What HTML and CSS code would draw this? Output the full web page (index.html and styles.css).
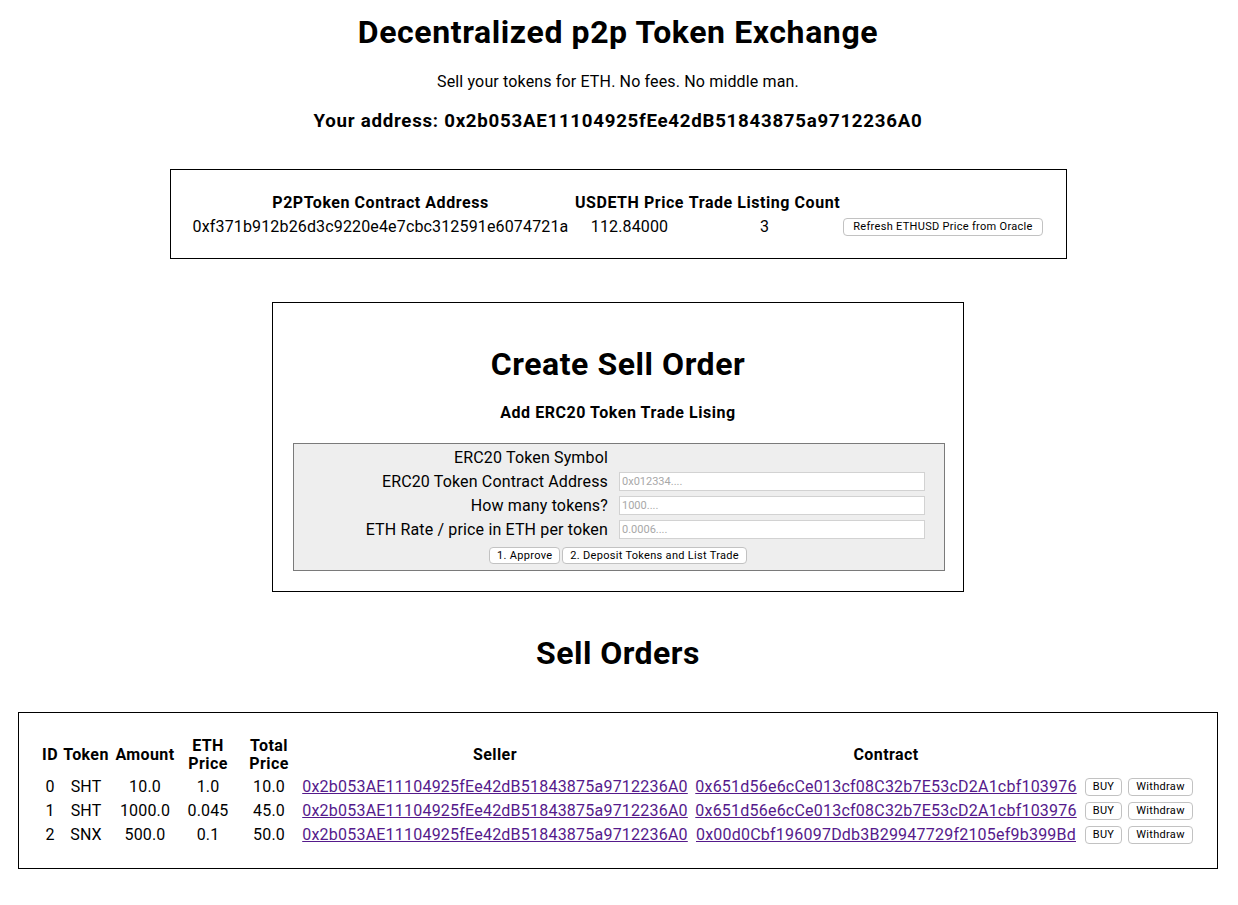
FILE: index.html
```html
<!DOCTYPE html>
<html>
<head>
<meta charset="utf-8">
<title>Decentralized p2p Token Exchange</title>
<link rel="stylesheet" href="styles.css">
</head>
<body>
<div class="app">
  <h1 class="title">Decentralized p2p Token Exchange</h1>
  <p class="subtitle">Sell your tokens for ETH. No fees. No middle man.</p>
  <h3 class="address">Your address: 0x2b053AE11104925fEe42dB51843875a9712236A0</h3>

  <div class="box info-box">
    <table class="info-table">
      <colgroup>
        <col class="c-addr"><col class="c-price"><col class="c-count"><col class="c-btn">
      </colgroup>
      <tr>
        <th>P2PToken Contract Address</th>
        <th>USDETH Price</th>
        <th>Trade Listing Count</th>
        <th></th>
      </tr>
      <tr>
        <td>0xf371b912b26d3c9220e4e7cbc312591e6074721a</td>
        <td>112.84000</td>
        <td>3</td>
        <td><button class="btn btn-wide">Refresh ETHUSD Price from Oracle</button></td>
      </tr>
    </table>
  </div>

  <div class="box create-box">
    <h1 class="create-title">Create Sell Order</h1>
    <h4 class="create-sub">Add ERC20 Token Trade Lising</h4>
    <div class="form-panel">
      <div class="form-grid">
        <label class="form-label">ERC20 Token Symbol</label>
        <span></span>
        <label class="form-label">ERC20 Token Contract Address</label>
        <input class="form-input" type="text" placeholder="0x012334....">
        <label class="form-label">How many tokens?</label>
        <input class="form-input" type="text" placeholder="1000....">
        <label class="form-label">ETH Rate / price in ETH per token</label>
        <input class="form-input" type="text" placeholder="0.0006....">
      </div>
      <div class="form-actions">
        <button class="btn">1. Approve</button><button class="btn">2. Deposit Tokens and List Trade</button>
      </div>
    </div>
  </div>

  <h1 class="orders-title">Sell Orders</h1>

  <div class="box orders-box">
    <table class="orders-table">
      <colgroup>
        <col class="o-id"><col class="o-token"><col class="o-amount"><col class="o-eth"><col class="o-total">
        <col class="o-seller"><col class="o-contract"><col class="o-buy"><col class="o-withdraw">
      </colgroup>
      <thead>
        <tr>
          <th>ID</th><th>Token</th><th>Amount</th><th>ETH Price</th><th>Total Price</th>
          <th>Seller</th><th>Contract</th><th></th><th></th>
        </tr>
      </thead>
      <tbody>
        <tr>
          <td>0</td><td>SHT</td><td>10.0</td><td>1.0</td><td>10.0</td>
          <td><a class="link" href="#">0x2b053AE11104925fEe42dB51843875a9712236A0</a></td>
          <td><a class="link" href="#">0x651d56e6cCe013cf08C32b7E53cD2A1cbf103976</a></td>
          <td><button class="btn">BUY</button></td>
          <td><button class="btn">Withdraw</button></td>
        </tr>
        <tr>
          <td>1</td><td>SHT</td><td>1000.0</td><td>0.045</td><td>45.0</td>
          <td><a class="link" href="#">0x2b053AE11104925fEe42dB51843875a9712236A0</a></td>
          <td><a class="link" href="#">0x651d56e6cCe013cf08C32b7E53cD2A1cbf103976</a></td>
          <td><button class="btn">BUY</button></td>
          <td><button class="btn">Withdraw</button></td>
        </tr>
        <tr>
          <td>2</td><td>SNX</td><td>500.0</td><td>0.1</td><td>50.0</td>
          <td><a class="link" href="#">0x2b053AE11104925fEe42dB51843875a9712236A0</a></td>
          <td><a class="link" href="#">0x00d0Cbf196097Ddb3B29947729f2105ef9b399Bd</a></td>
          <td><button class="btn">BUY</button></td>
          <td><button class="btn">Withdraw</button></td>
        </tr>
      </tbody>
    </table>
  </div>
</div>
</body>
</html>
```

FILE: styles.css
```css
* { box-sizing: border-box; }

body {
  margin: 0;
  padding-right: 2px;
  background: #ffffff;
  color: #000000;
  font-family: Roboto, "Liberation Sans", sans-serif;
  font-size: 16px;
  letter-spacing: 0.15px;
}

.app {
  text-align: center;
  padding-bottom: 37px;
}

.title {
  font-size: 32px;
  font-weight: 700;
  line-height: 37px;
  letter-spacing: 0.6px;
  margin: 14px 0 0;
}

.subtitle {
  margin: 21px 0 0;
  line-height: 19px;
}

.address {
  font-size: 18.72px;
  font-weight: 700;
  line-height: 22px;
  letter-spacing: 0.72px;
  margin: 19px 0 0;
}

.box {
  border: 1px solid #000;
  margin-left: auto;
  margin-right: auto;
}

/* info box */
.info-box {
  width: 897px;
  margin-top: 37px;
  padding: 20px;
}

.info-table {
  width: 100%;
  table-layout: fixed;
  border-collapse: collapse;
}

.info-table th,
.info-table td {
  padding: 0;
  height: 24px;
  text-align: center;
  white-space: nowrap;
  vertical-align: middle;
}

.info-table th {
  letter-spacing: 0.55px;
}

.c-addr { width: 380px; }
.c-price { width: 118px; }
.c-count { width: 152px; }
.c-btn { width: 205px; }

/* create sell order */
.create-box {
  width: 692px;
  margin-top: 43px;
  padding: 20px;
}

.create-title {
  font-size: 32px;
  font-weight: 700;
  line-height: 37px;
  letter-spacing: 0.55px;
  margin: 23px 0 0;
}

.create-sub {
  font-size: 16px;
  font-weight: 700;
  line-height: 19px;
  letter-spacing: 0.55px;
  margin: 20px 0 0;
}

.form-panel {
  margin-top: 21px;
  margin-right: -2px;
  background: #eeeeee;
  border: 1px solid #7a7a7a;
  padding: 2px 19px 6px 0;
}

.form-grid {
  display: grid;
  grid-template-columns: 1fr 306px;
  grid-template-rows: 23px 24px 24px 24px;
  column-gap: 11px;
  align-items: center;
}

.form-label {
  text-align: right;
  line-height: 19px;
}

.form-input {
  width: 306px;
  height: 19px;
  border: 1px solid #d2d2d2;
  background: #ffffff;
  font-family: inherit;
  font-size: 11px;
  padding: 0 2px;
  outline: none;
}

.form-input::placeholder {
  color: #a8a8a8;
}

.form-actions {
  margin-top: 6px;
  margin-right: -17px;
  text-align: center;
  line-height: 17px;
}

/* buttons */
.btn {
  font-family: inherit;
  font-size: 11px;
  line-height: 14px;
  letter-spacing: 0.3px;
  height: 18px;
  padding: 1px 7px;
  background: #ffffff;
  color: #000;
  border: 1px solid #c2c2c2;
  border-radius: 4px;
  vertical-align: middle;
}

.btn-wide {
  padding-left: 9px;
  padding-right: 9px;
}

.form-actions .btn {
  height: 17px;
  padding-top: 0;
  padding-bottom: 0;
  margin: 0 1px;
  vertical-align: top;
}

/* sell orders */
.orders-title {
  font-size: 32px;
  font-weight: 700;
  line-height: 37px;
  letter-spacing: 0.45px;
  margin: 43px 0 0;
}

.orders-box {
  width: 1200px;
  margin-top: 40px;
  padding: 21px 20px 22px;
}

.orders-table {
  width: 100%;
  table-layout: fixed;
  border-collapse: collapse;
}

.orders-table th {
  padding: 3px 0 1px;
  line-height: 18px;
  font-weight: 700;
  letter-spacing: 0.4px;
  vertical-align: middle;
  text-align: center;
}

.orders-table td {
  padding: 0;
  height: 24px;
  text-align: center;
  white-space: nowrap;
  vertical-align: middle;
}

.o-id { width: 22px; }
.o-token { width: 50px; }
.o-amount { width: 68px; }
.o-eth { width: 58px; }
.o-total { width: 64px; }
.o-seller { width: 388px; }
.o-contract { width: 394px; }
.o-buy { width: 41px; }
.o-withdraw { width: 73px; }

.link {
  color: #551a8b;
  text-decoration: underline;
  letter-spacing: 0.22px;
}
```
